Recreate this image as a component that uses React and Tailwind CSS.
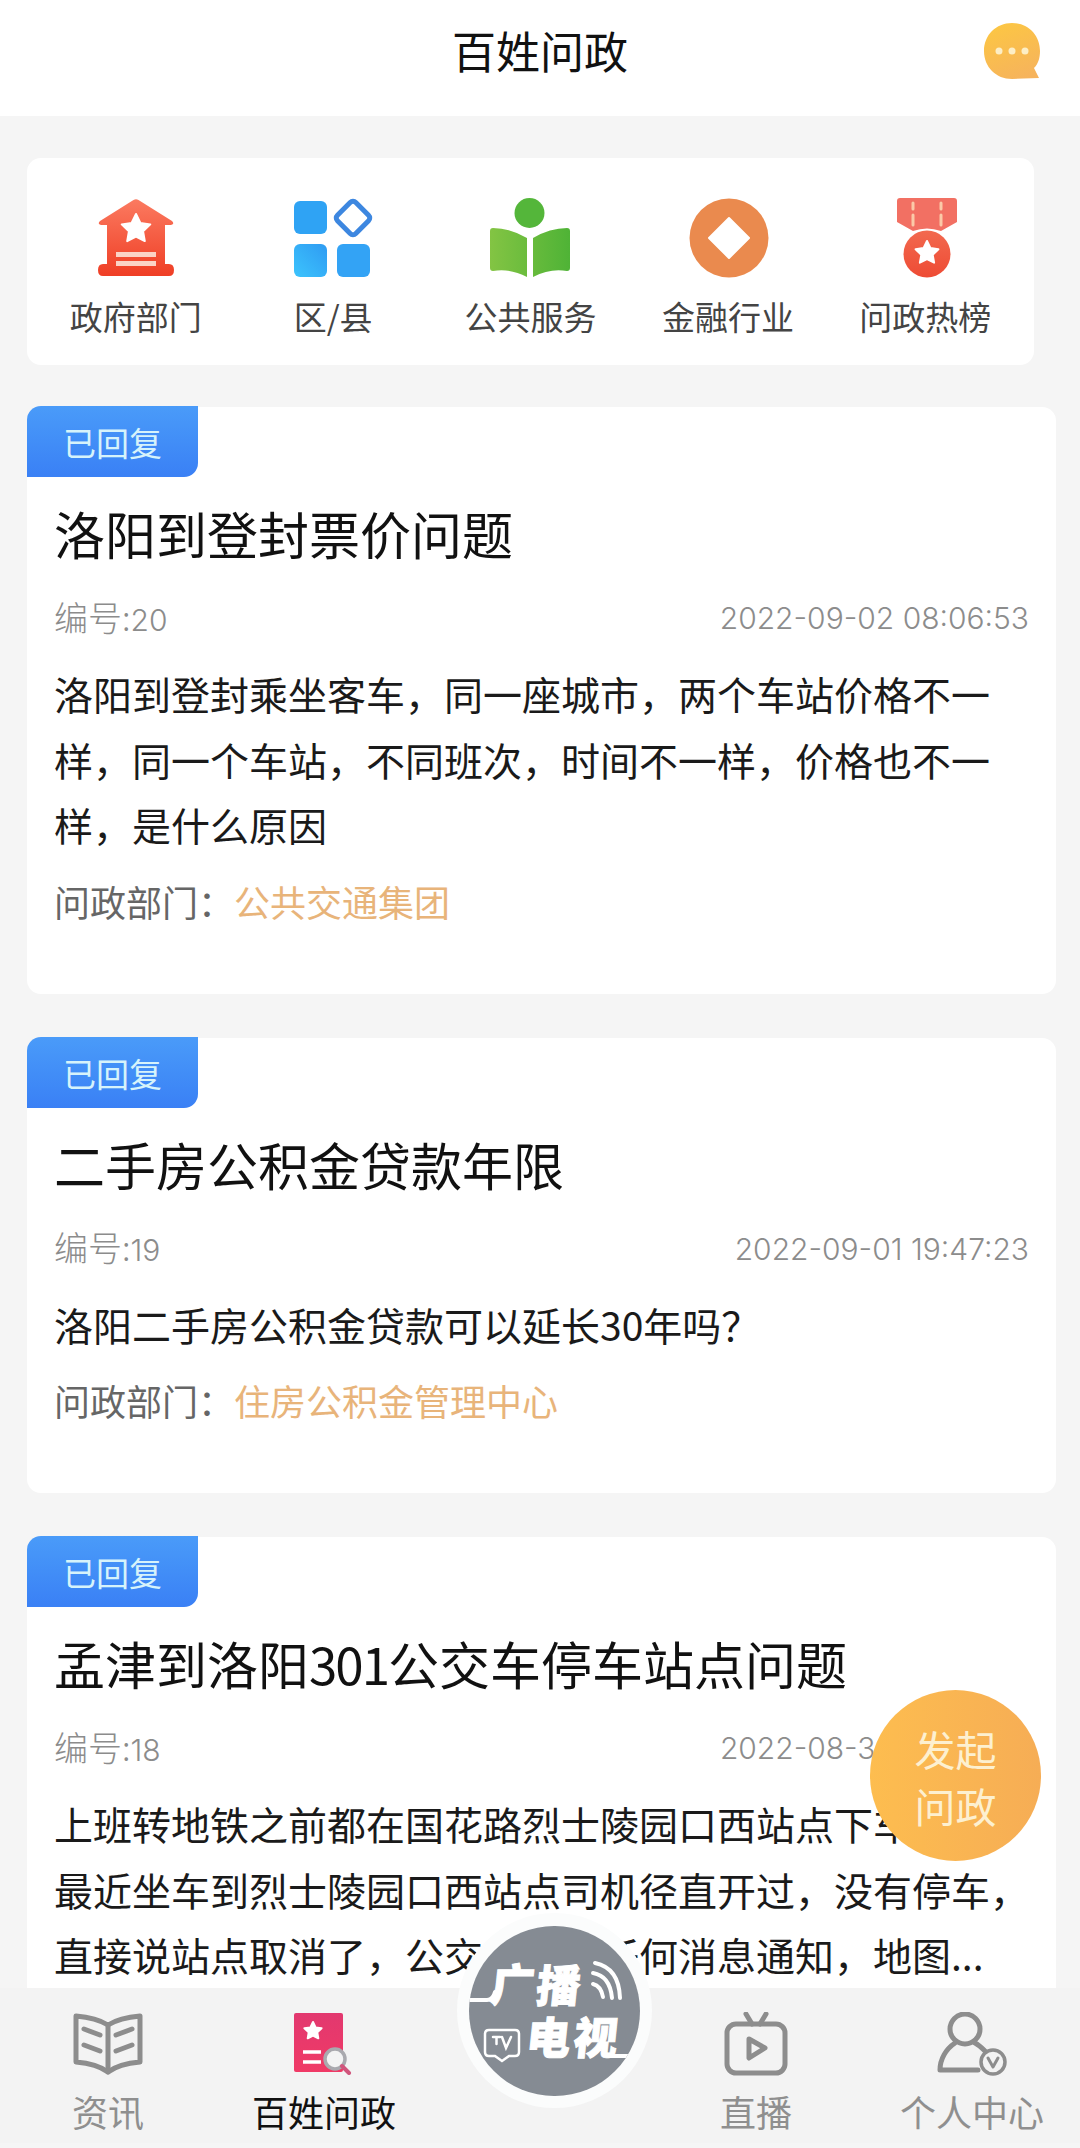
import { useId } from 'react';

const CJK = "font-['Noto_Sans_CJK_SC',sans-serif]";

const CATEGORIES = [
  { label: '政府部门', icon: <HouseIcon /> },
  { label: '区/县', icon: <GridIcon /> },
  { label: '公共服务', icon: <ReadingIcon /> },
  { label: '金融行业', icon: <CoinIcon /> },
  { label: '问政热榜', icon: <MedalIcon /> },
];

const POSTS = [
  {
    title: '洛阳到登封票价问题',
    no: '20',
    time: '2022-09-02 08:06:53',
    body: '洛阳到登封乘坐客车，同一座城市，两个车站价格不一\n样，同一个车站，不同班次，时间不一样，价格也不一\n样，是什么原因',
    dept: '公共交通集团',
  },
  {
    title: '二手房公积金贷款年限',
    no: '19',
    time: '2022-09-01 19:47:23',
    body: '洛阳二手房公积金贷款可以延长30年吗？',
    dept: '住房公积金管理中心',
  },
  {
    title: <>孟津到洛阳<span className="tracking-[-2px]">301</span>公交车停车站点问题</>,
    no: '18',
    time: '2022-08-30 09:26:38',
    body: '上班转地铁之前都在国花路烈士陵园口西站点下车了，\n最近坐车到烈士陵园口西站点司机径直开过，没有停车，\n直接说站点取消了，公交公司没任何消息通知，地图...',
  },
];

function Star({ cx, cy, r, fill = '#fff' }) {
  const pts = [];
  for (let i = 0; i < 10; i++) {
    const rad = i % 2 === 0 ? r : r * 0.5;
    const a = (Math.PI / 5) * i - Math.PI / 2;
    pts.push(`${(cx + rad * Math.cos(a)).toFixed(1)},${(cy + rad * Math.sin(a)).toFixed(1)}`);
  }
  return <polygon points={pts.join(' ')} fill={fill} stroke={fill} strokeWidth="2" strokeLinejoin="round" />;
}

function HouseIcon() {
  const id = useId();
  return (
    <svg width="76" height="78" viewBox="0 0 76 78">
      <defs>
        <linearGradient id={id} x1="0" y1="0" x2="0" y2="1">
          <stop offset="0" stopColor="#fb7a60" />
          <stop offset="1" stopColor="#ef3e25" />
        </linearGradient>
      </defs>
      <path
        d="M35.500 1 Q38 -0.500 40.500 1 L74 22 Q77 25 73 26 L67 26 L67 65 L71 65 Q76 65 76 71 Q76 77 71 77 L5 77 Q0 77 0 71 Q0 65 5 65 L9 65 L9 26 L3 26 Q-1 25 2 22 Z"
        fill={`url(#${id})`}
      />
      <Star cx={38} cy={30} r={15} />
      <rect x="18" y="53" width="40" height="5" fill="#fbd3c6" />
      <rect x="18" y="62" width="40" height="5" fill="#fbd3c6" />
    </svg>
  );
}

function GridIcon() {
  const id = useId();
  return (
    <svg width="80" height="80" viewBox="0 0 80 80">
      <defs>
        <linearGradient id={id} x1="0" y1="1" x2="1" y2="0">
          <stop offset="0" stopColor="#3cc4fd" />
          <stop offset="1" stopColor="#2f9bf2" />
        </linearGradient>
      </defs>
      <rect x="1" y="3" width="33" height="33" rx="6" fill="#2fa3f4" />
      <rect x="1" y="46" width="33" height="33" rx="6" fill={`url(#${id})`} />
      <rect x="44" y="46" width="33" height="33" rx="6" fill="#33a3f5" />
      <rect x="47" y="7" width="26" height="26" rx="4" fill="none" stroke="#3d87e0" strokeWidth="5" transform="rotate(45 60 20)" />
    </svg>
  );
}

function ReadingIcon() {
  const id = useId();
  return (
    <svg width="80" height="80" viewBox="0 0 80 80">
      <defs>
        <linearGradient id={id} x1="0" y1="0" x2="1" y2="0">
          <stop offset="0" stopColor="#83c443" />
          <stop offset="1" stopColor="#4fb336" />
        </linearGradient>
      </defs>
      <ellipse cx="39.500" cy="15" rx="15" ry="15" fill="#54b63a" />
      <path
        d="M3 30 Q20 30 37 40 L37 79 Q20 70 3 73 Q0 73 0 70 L0 33 Q0 30 3 30 Z M43 40 Q60 30 77 30 Q80 30 80 33 L80 70 Q80 73 77 73 Q60 70 43 79 Z"
        fill={`url(#${id})`}
      />
    </svg>
  );
}

function CoinIcon() {
  return (
    <svg className="ml-[2px]" width="80" height="80" viewBox="0 0 80 80">
      <circle cx="40" cy="40" r="39.500" fill="#ea8a4e" />
      <path d="M40 20 L60 40 L40 60 L20 40 Z" fill="#fff" stroke="#fff" strokeWidth="2" strokeLinejoin="round" />
    </svg>
  );
}

function MedalIcon() {
  const id = useId();
  return (
    <svg className="ml-[4px]" width="60" height="80" viewBox="0 0 60 80">
      <defs>
        <linearGradient id={id} x1="0" y1="0" x2="0" y2="1">
          <stop offset="0" stopColor="#f2694f" />
          <stop offset="1" stopColor="#ee4b34" />
        </linearGradient>
      </defs>
      <path d="M3 0 L57 0 Q60 0 60 3 L60 24 L44 33 Q30 28 16 33 L0 24 L0 3 Q0 0 3 0 Z" fill="#f27063" />
      <path d="M16 5 V11 M16 17 V27 M44 5 V11 M44 17 V27" stroke="#fbc9a8" strokeWidth="3" strokeLinecap="round" />
      <circle cx="30" cy="56" r="23.500" fill={`url(#${id})`} />
      <Star cx={30} cy={55} r={12} />
    </svg>
  );
}

function BubbleIcon() {
  const id = useId();
  return (
    <svg width="56" height="56" viewBox="0 0 56 56">
      <defs>
        <linearGradient id={id} x1="0.300" y1="0" x2="0.700" y2="1">
          <stop offset="0" stopColor="#fcc644" />
          <stop offset="1" stopColor="#f6b35c" />
        </linearGradient>
      </defs>
      <path d="M28 0 C44 0 56 12 56 28 C56 35 54 41 50 45 L55 55 L28 56 C12 56 0 44 0 28 C0 12 12 0 28 0 Z" fill={`url(#${id})`} />
      <circle cx="15" cy="28" r="3.500" fill="#fdeec5" />
      <circle cx="28" cy="28" r="3.500" fill="#fdeec5" />
      <circle cx="41" cy="28" r="3.500" fill="#fdeec5" />
    </svg>
  );
}

function BookTabIcon() {
  return (
    <svg width="70" height="62" viewBox="0 0 70 62" fill="none" stroke="#8d8d8d" strokeWidth="5" strokeLinejoin="round" strokeLinecap="round">
      <path d="M35 12 C27 7 15 4 3 3 L3 49 C15 50 27 53 35 59 C43 53 55 50 67 49 L67 3 C55 4 43 7 35 12 Z" />
      <path d="M35 12 V59" />
      <path d="M11 16 L27 22 M11 32 L27 38 M59 16 L43 22 M59 32 L43 38" />
    </svg>
  );
}

function DocTabIcon() {
  const id = useId();
  return (
    <svg width="60" height="62" viewBox="0 0 60 62">
      <defs>
        <linearGradient id={id} x1="0" y1="0" x2="0" y2="1">
          <stop offset="0" stopColor="#e2386f" />
          <stop offset="1" stopColor="#f03a66" />
        </linearGradient>
      </defs>
      <rect x="0" y="0" width="49" height="59" rx="2" fill={`url(#${id})`} />
      <Star cx={19} cy={18} r={9} />
      <path d="M9 39 H27 M9 49 H27" stroke="#fff" strokeWidth="3.500" />
      <circle cx="41" cy="46" r="10" fill="#f3f3f3" stroke="#a9a9ae" strokeWidth="3.500" />
      <path d="M48 53 L55 60" stroke="#d0557c" strokeWidth="4" strokeLinecap="round" />
    </svg>
  );
}

function TvTabIcon() {
  return (
    <svg width="64" height="64" viewBox="0 0 64 64" fill="none" stroke="#8d8d8d" strokeWidth="5" strokeLinejoin="round" strokeLinecap="round">
      <path d="M22 2 L28 12 M42 2 L36 12" />
      <rect x="3" y="12" width="58" height="49" rx="9" />
      <path d="M25 27 L41 36 L25 46 Z" />
    </svg>
  );
}

function PersonTabIcon() {
  return (
    <svg width="70" height="64" viewBox="0 0 70 64" fill="none" stroke="#8d8d8d" strokeLinecap="round" strokeLinejoin="round">
      <ellipse cx="28" cy="17" rx="15" ry="15" strokeWidth="5" />
      <path d="M18 31 C9 37 3 47 3 58 L41 58" strokeWidth="5" />
      <path d="M38 31 C42 33 45 36 48 39" strokeWidth="5" />
      <circle cx="56" cy="50" r="12" strokeWidth="3.500" />
      <path d="M51 46 L56 55 L61 46" strokeWidth="3" />
    </svg>
  );
}

function PostCard({ post }) {
  return (
    <article className="bg-white rounded-[14px] pb-[68px]">
      <div className="w-[171px] h-[71px] -mt-px pt-[3px] flex items-center justify-center rounded-tl-[14px] rounded-br-[14px] bg-gradient-to-b from-[#4a9bf9] to-[#3a80f5] text-[33px] text-[#d6f3fb]">
        已回复
      </div>
      <div className="pl-[27px] pr-[27px]">
        <h2 className="mt-[21px] text-[51px] leading-[70px] font-normal text-[#111] whitespace-nowrap">{post.title}</h2>
        <div className="mt-[30px] h-[40px] flex items-center justify-between text-[34px] leading-[40px] text-[#8c8c8c] font-light">
          <span>
            编号:<span className="font-['Inter'] text-[30px]">{post.no}</span>
          </span>
          <span className="font-['Inter'] text-[30px]">{post.time}</span>
        </div>
        <p className="mt-[23px] -mr-[2px] whitespace-pre text-[39px] leading-[65.500px] text-[#1a1a1a]">{post.body}</p>
        {post.dept && (
          <div className="mt-[18px] text-[36px] leading-[50px]">
            <span className="text-[#666]">问政部门：</span>
            <span className="text-[#e8b47a]">{post.dept}</span>
          </div>
        )}
      </div>
    </article>
  );
}

function TabItem({ icon, label, active }) {
  return (
    <div className="flex flex-col items-center">
      <div className="h-[64px] flex items-center justify-center">{icon}</div>
      <div className={`mt-[12px] text-[36px] leading-[46px] ${active ? 'text-[#111]' : 'text-[#8f8f8f]'}`}>{label}</div>
    </div>
  );
}

export default function App() {
  return (
    <div className={`relative h-[2148px] w-[1080px] flex flex-col overflow-hidden bg-[#f5f5f5] ${CJK}`}>
      {/* header */}
      <header className="relative h-[116px] shrink-0 bg-white flex items-center justify-center">
        <h1 className="text-[44px] font-normal text-[#111] -mt-[16px]">百姓问政</h1>
        <div className="absolute right-[40px] top-[23px]">
          <BubbleIcon />
        </div>
      </header>

      <main className="flex-1 min-h-0 overflow-hidden pl-[27px] pr-[24px] pt-[42px]">
        <section className="w-[1007px] h-[207px] bg-white rounded-[14px] px-[10px] pt-[40px] grid grid-cols-5">
          {CATEGORIES.map((c) => (
            <div key={c.label} className="flex flex-col items-center">
              <div className="h-[80px] flex items-center justify-center">{c.icon}</div>
              <div className="mt-[16px] text-[33px] leading-[44px] text-[#444]">{c.label}</div>
            </div>
          ))}
        </section>

        <div className="mt-[42px] flex flex-col gap-[44px]">
          {POSTS.map((p) => (
            <PostCard key={p.no} post={p} />
          ))}
        </div>
      </main>

      {/* tab bar */}
      <nav className="relative h-[155px] mb-[5px] shrink-0 bg-[#f3f3f3] grid grid-cols-5 pt-[24px]">
        <TabItem icon={<BookTabIcon />} label="资讯" />
        <TabItem icon={<DocTabIcon />} label="百姓问政" active />
        <div />
        <TabItem icon={<TvTabIcon />} label="直播" />
        <TabItem icon={<PersonTabIcon />} label="个人中心" />

        {/* broadcast logo */}
        <div className="absolute left-[457px] -top-[75px] w-[195px] h-[195px] rounded-full bg-[#fbfcfc] flex items-center justify-center">
          <div className="relative w-[171px] h-[170px] rounded-full bg-[#858b93] overflow-hidden text-white font-black">
            <span className="absolute left-[22px] top-[26px] text-[44px] leading-[60px] -skew-x-6 [-webkit-text-stroke:1px_white]">广</span>
            <span className="absolute left-[68px] top-[27px] text-[44px] leading-[60px] -skew-x-6 [-webkit-text-stroke:1px_white]">播</span>
            <span className="absolute left-[58px] top-[79px] text-[44px] leading-[60px] -skew-x-6 [-webkit-text-stroke:1px_white]">电</span>
            <span className="absolute left-[105px] top-[79px] text-[44px] leading-[60px] -skew-x-6 [-webkit-text-stroke:1px_white]">视</span>
            <svg className="absolute left-0 top-0" width="171" height="170" viewBox="0 0 171 170" fill="none" stroke="#fff" strokeLinecap="round">
              <path d="M0 74 H18 Q24 74 26 66" strokeWidth="4" />
              <path d="M124 58 Q132 60 134 71 M124 47 Q141 50 143 72 M126 37 Q150 42 151 72" strokeWidth="4" />
              <path d="M140 130 H171" strokeWidth="4" />
              <path d="M20 104 H46 Q50 104 50 108 V126 Q50 130 46 130 H40 L33 135 L26 130 H20 Q16 130 16 126 V108 Q16 104 20 104 Z" strokeWidth="2.500" />
              <path d="M24 111 H31 M27.500 111 V118 M33 111 L37 122 L42 111" strokeWidth="2.500" />
            </svg>
          </div>
        </div>
      </nav>

      {/* floating ask button */}
      <div className="absolute left-[870px] top-[1690px] w-[171px] h-[171px] pt-[3px] rounded-full bg-gradient-to-r from-[#fdbd4f] to-[#f6ad55] flex items-center justify-center text-center text-[41px] leading-[57px] text-[#fdf0d0]">
        发起
        <br />
        问政
      </div>
    </div>
  );
}
